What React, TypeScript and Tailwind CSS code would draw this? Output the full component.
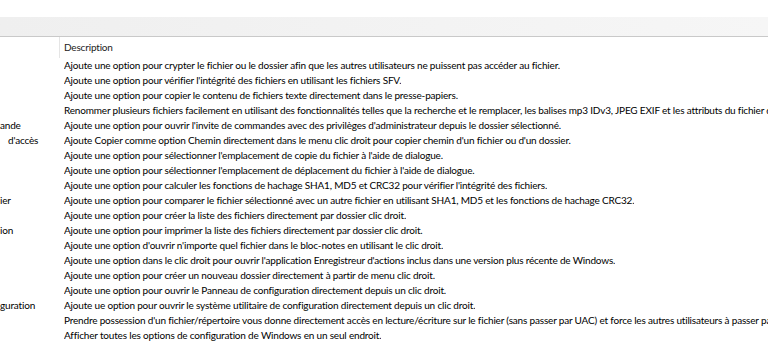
import React from 'react';

const rows: { name: string; pad?: string; desc: string }[] = [
  { name: '', desc: "Ajoute une option pour crypter le fichier ou le dossier afin que les autres utilisateurs ne puissent pas accéder au fichier." },
  { name: '', desc: "Ajoute une option pour vérifier l'intégrité des fichiers en utilisant les fichiers SFV." },
  { name: '', desc: "Ajoute une option pour copier le contenu de fichiers texte directement dans le presse-papiers." },
  { name: '', desc: "Renommer plusieurs fichiers facilement en utilisant des fonctionnalités telles que la recherche et le remplacer, les balises mp3 IDv3, JPEG EXIF et les attributs du fichier de" },
  { name: 'ande', desc: "Ajoute une option pour ouvrir l'invite de commandes avec des privilèges d'administrateur depuis le dossier sélectionné." },
  { name: "d'accès", pad: 'pl-[8px]', desc: "Ajoute Copier comme option Chemin directement dans le menu clic droit pour copier chemin d'un fichier ou d'un dossier." },
  { name: '', desc: "Ajoute une option pour sélectionner l'emplacement de copie du fichier à l'aide de dialogue." },
  { name: '', desc: "Ajoute une option pour sélectionner l'emplacement de déplacement du fichier à l'aide de dialogue." },
  { name: '', desc: "Ajoute une option pour calculer les fonctions de hachage SHA1, MD5 et CRC32 pour vérifier l'intégrité des fichiers." },
  { name: 'ier', desc: "Ajoute une option pour comparer le fichier sélectionné avec un autre fichier en utilisant SHA1, MD5 et les fonctions de hachage CRC32." },
  { name: '', desc: "Ajoute une option pour créer la liste des fichiers directement par dossier clic droit." },
  { name: 'ion', desc: "Ajoute une option pour imprimer la liste des fichiers directement par dossier clic droit." },
  { name: '', desc: "Ajoute une option d'ouvrir n'importe quel fichier dans le bloc-notes en utilisant le clic droit." },
  { name: '', desc: "Ajoute une option dans le clic droit pour ouvrir l'application Enregistreur d'actions inclus dans une version plus récente de Windows." },
  { name: '', desc: "Ajoute une option pour créer un nouveau dossier directement à partir de menu clic droit." },
  { name: '', desc: "Ajoute une option pour ouvrir le Panneau de configuration directement depuis un clic droit." },
  { name: 'guration', desc: "Ajoute ue option pour ouvrir le système utilitaire de configuration directement depuis un clic droit." },
  { name: '', desc: "Prendre possession d'un fichier/répertoire vous donne directement accès en lecture/écriture sur le fichier (sans passer par UAC) et force les autres utilisateurs à passer par" },
  { name: '', desc: "Afficher toutes les options de configuration de Windows en un seul endroit." },
];

export default function App() {
  return (
    <div className="w-[768px] h-[350px] overflow-hidden bg-white text-[10px] tracking-[-0.18px] text-black font-['Lato',sans-serif]">
      <div className="h-[17px]" />
      {/* toolbar strip */}
      <div className="h-[20px] bg-gradient-to-r from-[#efefef] to-[#f6f6f6] border-b border-[#c9c9c9]" />

      {/* column headers */}
      <div className="flex h-[21px] items-center">
        <div className="w-[60px] h-full border-r border-[#e5e5e5]" />
        <div className="pl-[4px] text-[#222]">Description</div>
      </div>

      {/* list rows */}
      <div className="flex flex-col">
        {rows.map((r, i) => (
          <div key={i} className="flex h-[15px] items-center whitespace-nowrap leading-[15px]">
            <div className={`w-[64px] shrink-0 overflow-hidden ${r.pad ?? ''}`}>{r.name}</div>
            <div className="overflow-hidden">{r.desc}</div>
          </div>
        ))}
      </div>
    </div>
  );
}
